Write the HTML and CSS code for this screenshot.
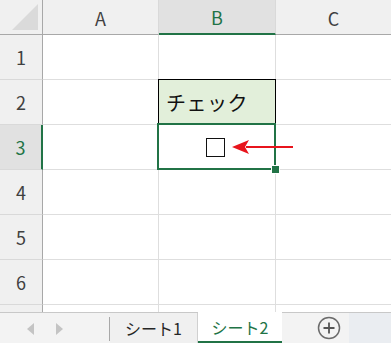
FILE: index.html
```html
<!DOCTYPE html>
<html lang="ja">
<head>
<meta charset="utf-8">
<link rel="stylesheet" href="styles.css">
</head>
<body>
<div class="app">
  <div class="sheet">
    <div class="grid">
      <div class="corner"><span class="tri"></span></div>
      <div class="ch">A</div>
      <div class="ch ch-sel">B</div>
      <div class="ch">C</div>

      <div class="rh">1</div>
      <div class="cell"></div><div class="cell"></div><div class="cell"></div>

      <div class="rh">2</div>
      <div class="cell"></div><div class="cell label">チェック</div><div class="cell"></div>

      <div class="rh rh-sel">3</div>
      <div class="cell"></div><div class="cell active"><span class="box"></span></div><div class="cell"></div>

      <div class="rh">4</div>
      <div class="cell"></div><div class="cell"></div><div class="cell"></div>

      <div class="rh">5</div>
      <div class="cell"></div><div class="cell"></div><div class="cell"></div>

      <div class="rh">6</div>
      <div class="cell"></div><div class="cell"></div><div class="cell"></div>

      <div class="rh"></div>
      <div class="cell"></div><div class="cell"></div><div class="cell"></div>
    </div>
    <svg class="arrow" width="64" height="16" viewBox="0 0 64 16">
      <line x1="14" y1="8" x2="61" y2="8" stroke="#e8141c" stroke-width="2"/>
      <path d="M0 8 L17 1 L13 8 L17 15 Z" fill="#e8141c"/>
    </svg>
  </div>
  <div class="tabs">
    <div class="nav">
      <span class="tri-l"></span>
      <span class="tri-r"></span>
    </div>
    <div class="tab">シート1</div>
    <div class="tab tab-on">シート2</div>
    <div class="add">
      <svg width="24" height="24" viewBox="0 0 24 24">
        <circle cx="12" cy="12" r="10.5" fill="none" stroke="#6b6b6b" stroke-width="1.5"/>
        <path d="M12 6.5v11M6.5 12h11" stroke="#555" stroke-width="1.8"/>
      </svg>
    </div>
    <div class="rest"></div>
  </div>
</div>
</body>
</html>
```
FILE: styles.css
```css
* { box-sizing: border-box; }
html, body { margin: 0; padding: 0; background: #fff; }
body {
  font-family: "Noto Sans CJK JP", "Noto Sans", sans-serif;
  width: 391px;
  height: 343px;
  overflow: hidden;
}
.app { display: flex; flex-direction: column; width: 391px; height: 343px; }
.sheet { position: relative; height: 312px; overflow: hidden; }
.grid {
  display: grid;
  grid-template-columns: 43px 116px 117px 116px;
  grid-template-rows: 35px repeat(7, 45px);
}
.corner {
  background: #f0f0f0;
  border-right: 1px solid #a8a8a8;
  border-bottom: 1px solid #a8a8a8;
  position: relative;
}
.tri {
  position: absolute;
  right: 4px;
  bottom: 4px;
  width: 0; height: 0;
  border-left: 26px solid transparent;
  border-bottom: 26px solid #dadada;
}
.ch {
  background: #f0f0f0;
  border-right: 1px solid #d9d9d9;
  border-bottom: 1px solid #a8a8a8;
  display: flex; align-items: center; justify-content: center;
  font-size: 18px;
  color: #404040;
  padding-top: 1px;
}
.ch-sel {
  background: #e1e1e1;
  color: #217346;
  border-bottom: 2px solid #217346;
}
.rh {
  background: #f0f0f0;
  border-right: 1px solid #a8a8a8;
  border-bottom: 1px solid #d9d9d9;
  display: flex; align-items: center; justify-content: center;
  font-size: 18px;
  color: #404040;
}
.rh-sel {
  background: #e1e1e1;
  color: #217346;
  border-right: 2px solid #217346;
}
.cell {
  border-right: 1px solid #dedede;
  border-bottom: 1px solid #dedede;
  background: #fff;
}
.label {
  background: #e2efda;
  border: 1px solid #000;
  margin: -1px 0 0 -1px;
  display: flex; align-items: center;
  padding-left: 7px;
  font-size: 20px;
  color: #111;
  letter-spacing: 0.5px;
}
.active {
  position: relative;
  display: flex; align-items: center; justify-content: center;
  padding-right: 4px;
}
.active::before {
  content: "";
  position: absolute;
  left: -2px; top: -2px; right: -1px; bottom: -1px;
  border: 2px solid #217346;
}
.active::after {
  content: "";
  position: absolute;
  right: -4px; bottom: -4px;
  width: 7px; height: 7px;
  background: #217346;
  border: 1px solid #fff;
  box-sizing: content-box;
  margin: -1px;
}
.box {
  width: 19px; height: 19px;
  border: 1.5px solid #111;
  background: #fff;
}
.arrow { position: absolute; left: 232px; top: 139px; }

.tabs {
  height: 31px;
  display: flex;
  background: #f3f3f3;
  border-top: 1px solid #c8c8c8;
  font-size: 16px;
}
.nav {
  width: 110px;
  display: flex; align-items: center;
  padding-left: 27px; gap: 22px;
  border-right: 1px solid #a8a8a8;
  margin: 4px 0 2px;
}
.tri-l, .tri-r { width: 0; height: 0; border-top: 6px solid transparent; border-bottom: 6px solid transparent; }
.tri-l { border-right: 7px solid #c4c4c4; }
.tri-r { border-left: 7px solid #c4c4c4; }
.tab {
  width: 88px;
  display: flex; align-items: center; justify-content: center;
  color: #262626;
  border-right: 1px solid #d0d0d0;
  background: #f0f0f0;
  padding-bottom: 1px;
}
.tab-on {
  width: 84px;
  background: #fff;
  color: #217346;
  border-right: none;
  margin-top: -1px;
  border-bottom: 2px solid #217346;
  padding-bottom: 0;
}
.add {
  width: 67px;
  display: flex; align-items: center; justify-content: center;
  padding-left: 26px;
}
.rest { flex: 1; background: #eaedf1; }
```
